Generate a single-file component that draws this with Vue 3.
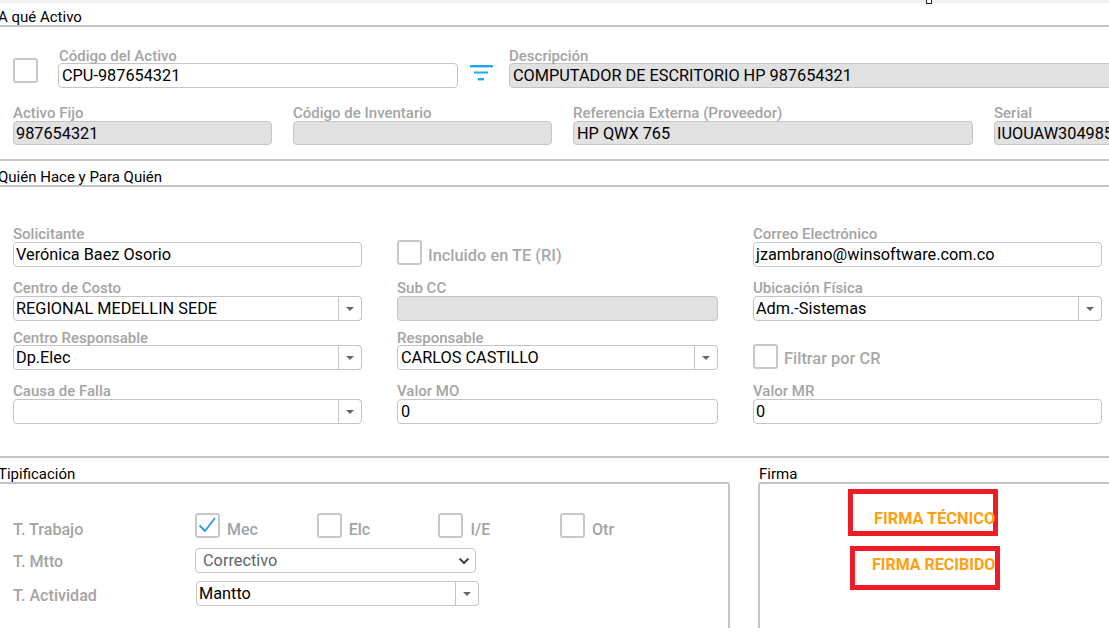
<script setup>
const activoTop = [
  { label: 'Activo Fijo', value: '987654321', w: 259 },
  { label: 'Código de Inventario', value: '', w: 259 },
  { label: 'Referencia Externa (Proveedor)', value: 'HP QWX 765', w: 400 },
  { label: 'Serial', value: 'IUOUAW304985', w: 140 },
]
const filas = [
  { cls: 'r1', cells: [
    { label: 'Solicitante', value: 'Verónica Baez Osorio' },
    { check: 'Incluido en TE (RI)' },
    { label: 'Correo Electrónico', value: 'jzambrano@winsoftware.com.co' },
  ] },
  { cls: 'r2', cells: [
    { label: 'Centro de Costo', value: 'REGIONAL MEDELLIN SEDE', combo: true },
    { label: 'Sub CC', value: '', off: true },
    { label: 'Ubicación Física', value: 'Adm.-Sistemas', combo: true },
  ] },
  { cls: 'r3', cells: [
    { label: 'Centro Responsable', value: 'Dp.Elec', combo: true },
    { label: 'Responsable', value: 'CARLOS CASTILLO', combo: true },
    { check: 'Filtrar por CR' },
  ] },
  { cls: 'r4', cells: [
    { label: 'Causa de Falla', value: '', combo: true },
    { label: 'Valor MO', value: '0' },
    { label: 'Valor MR', value: '0' },
  ] },
]
const tipos = [
  { label: 'Mec', on: true },
  { label: 'Elc', on: false },
  { label: 'I/E', on: false },
  { label: 'Otr', on: false },
]
</script>

<template>
  <div class="page">
    <div class="strip"></div>
    <span class="cursor"></span>

    <div class="head first">A qué Activo</div>

    <div class="row-a">
      <span class="box big"></span>
      <div class="field code">
        <label>Código del Activo</label>
        <div class="input pad3">CPU-987654321</div>
      </div>
      <svg class="filter" width="24" height="16" viewBox="0 0 24 16">
        <rect x="0" y="0" width="23" height="2.4" fill="#1ea7f0" />
        <rect x="4" y="6.5" width="14" height="2" fill="#1ea7f0" />
        <rect x="8" y="13" width="6" height="2.4" fill="#1ea7f0" />
      </svg>
      <div class="field desc">
        <label>Descripción</label>
        <div class="input off pad3">COMPUTADOR DE ESCRITORIO HP 987654321</div>
      </div>
    </div>

    <div class="row-b">
      <div v-for="c in activoTop" :key="c.label" class="field" :style="{ width: c.w + 'px' }">
        <label>{{ c.label }}</label>
        <div class="input off short">{{ c.value }}</div>
      </div>
    </div>

    <div class="head second">Quién Hace y Para Quién</div>

    <div class="people">
      <div v-for="f in filas" :key="f.cls" class="people-row" :class="f.cls">
        <template v-for="c in f.cells" :key="c.label || c.check">
          <div v-if="c.check" class="check-cell">
            <span class="box"></span>
            <span class="check-text">{{ c.check }}</span>
          </div>
          <div v-else class="field">
            <label>{{ c.label }}</label>
            <div class="input" :class="{ off: c.off, combo: c.combo }">
              <span class="val">{{ c.value }}</span>
              <span v-if="c.combo" class="drop"><i></i></span>
            </div>
          </div>
        </template>
      </div>
    </div>

    <div class="lower">
      <section class="tip">
        <div class="sub">Tipificación</div>
        <div class="panel tip-panel">
          <div class="tip-row trabajo">
            <span class="tip-label">T. Trabajo</span>
            <div class="checks">
              <div v-for="t in tipos" :key="t.label" class="tcheck">
                <span class="box">
                  <svg v-if="t.on" width="21" height="21" viewBox="0 0 21 21">
                    <path d="M2.5 10.5 L8 16 L18 3" fill="none" stroke="#2196f3" stroke-width="1.8" />
                  </svg>
                </span>
                <span class="tcheck-text">{{ t.label }}</span>
              </div>
            </div>
          </div>
          <div class="tip-row mtto">
            <span class="tip-label">T. Mtto</span>
            <div class="input native">
              <span class="val">Correctivo</span>
              <svg width="12" height="8" viewBox="0 0 12 8">
                <path d="M1.5 1.5 L6 6 L10.5 1.5" fill="none" stroke="#444" stroke-width="2" />
              </svg>
            </div>
          </div>
          <div class="tip-row actividad">
            <span class="tip-label">T. Actividad</span>
            <div class="input combo act">
              <span class="val">Mantto</span>
              <span class="drop"><i></i></span>
            </div>
          </div>
        </div>
      </section>

      <section class="firma">
        <div class="sub firma-title">Firma</div>
        <div class="panel firma-panel">
          <div class="mark one"><b>FIRMA TÉCNICO</b></div>
          <div class="mark two"><b>FIRMA RECIBIDO</b></div>
        </div>
      </section>
    </div>
  </div>
</template>

<style>
html, body { margin: 0; background: #fff; overflow: hidden; }
</style>

<style scoped>
.page {
  position: relative;
  width: 1109px;
  height: 632px;
  overflow: hidden;
  background: #fff;
  font-family: Roboto, "Liberation Sans", sans-serif;
  color: #000;
}
.strip { height: 3px; background: #f3f0f0; }
.cursor {
  position: absolute;
  left: 926px;
  top: -2px;
  width: 4px;
  height: 4px;
  border: 1px solid #222;
  background: #fff;
}
.head {
  box-sizing: border-box;
  font-size: 15px;
  line-height: 18px;
  border-bottom: 2px solid #c4c4c4;
  text-indent: -2px;
}
.head.first { height: 24px; padding-top: 5px; }
.head.second {
  height: 28px;
  margin-top: 14px;
  padding-top: 7px;
  border-top: 2px solid #c4c4c4;
}

label {
  display: block;
  height: 14px;
  font-size: 15px;
  line-height: 14px;
  font-weight: 500;
  color: #a4a4a4;
  white-space: nowrap;
}
.input {
  box-sizing: border-box;
  display: flex;
  align-items: center;
  height: 25px;
  padding-left: 2px;
  border: 1px solid #c4c4c4;
  border-radius: 4px;
  background: #fff;
  font-size: 16.3px;
  white-space: nowrap;
}
.input.pad3 { padding-left: 3px; }
.input.off { background: #e1e1e1; }
.input.short { height: 24px; margin-top: 1px; }
.row-b .field:nth-child(3) .input { padding-left: 3px; }
.people-row .field:nth-child(2) .input { padding-left: 3px; }
.val { flex: 1; min-width: 0; }
.box {
  box-sizing: border-box;
  display: block;
  flex: none;
  width: 25px;
  height: 25px;
  border: 2px solid #c8c8c8;
  border-radius: 3px;
  background: #fff;
}

.row-a {
  display: flex;
  align-items: flex-start;
  height: 39px;
  margin-top: 22px;
  padding-left: 13px;
}
.row-a .big { margin-top: 9px; margin-right: 20px; }
.field.code { flex: none; width: 400px; }
.field.code label { padding-left: 1px; }
.filter { flex: none; margin: 16px 15px 0 12px; }
.field.desc { flex: none; width: 640px; }

.row-b {
  display: flex;
  gap: 21px;
  height: 39px;
  margin-top: 18px;
  padding-left: 13px;
}
.row-b .field { flex: none; }

.people { padding-top: 40px; }
.people-row {
  display: grid;
  grid-template-columns: 349px 321px 349px;
  column-gap: 35px;
  padding-left: 13px;
  height: 39px;
}
.people-row.r2 { margin-top: 15px; }
.people-row.r3 { margin-top: 11px; }
.people-row.r4 { margin-top: 14px; }
.people-row.r1 .input,
.people-row.r2 .input,
.people-row.r4 .input { margin-top: 1px; height: 25px; }
.people-row.r1 .check-cell { padding-top: 13px; }
.people-row.r3 .check-cell { padding-top: 13px; }
.people-row.r3 .check-text { margin-top: 2px; }
.check-cell { display: flex; align-items: flex-start; gap: 6px; }
.check-text {
  font-size: 16.4px;
  line-height: 25px;
  margin-top: 3px;
  font-weight: 500;
  color: #a8a8a8;
  white-space: nowrap;
}
.combo { padding-right: 0; }
.drop {
  box-sizing: border-box;
  flex: none;
  display: flex;
  align-items: center;
  justify-content: center;
  width: 24px;
  height: 25px;
  margin: 0 -1px 0 0;
  border: 1px solid #c4c4c4;
  border-radius: 0 4px 4px 0;
  background: #fff;
}
.drop i {
  width: 0;
  height: 0;
  border-left: 4px solid transparent;
  border-right: 4px solid transparent;
  border-top: 4px solid #666;
}

.lower {
  display: grid;
  grid-template-columns: 730px 351px;
  column-gap: 28px;
  margin-top: 33px;
  border-top: 2px solid #c4c4c4;
}
.sub {
  height: 24px;
  font-size: 15px;
  line-height: 18px;
  padding-top: 7px;
  box-sizing: border-box;
  text-indent: -2px;
}
.firma-title { text-indent: 1px; }
.panel {
  box-sizing: border-box;
  height: 146px;
  border: 2px solid #c4c4c4;
  border-bottom: 0;
  border-radius: 3px 3px 0 0;
}
.tip-panel {
  border-left: 0;
  border-top-left-radius: 0;
  padding: 31px 0 0 13px;
}
.tip-row { display: flex; align-items: center; height: 25px; }
.tip-row.mtto { margin-top: 8px; }
.tip-row.actividad { margin-top: 8px; }
.tip-label {
  flex: none;
  width: 182px;
  font-size: 16.1px;
  font-weight: 500;
  color: #a4a4a4;
  white-space: nowrap;
}
.tip-row.trabajo .tip-label { margin-top: 4px; }
.tip-row.mtto .tip-label { margin-top: 1px; }
.tip-row.actividad .tip-label { margin-top: 3px; }
.checks { display: flex; }
.tcheck { display: flex; width: 121.7px; gap: 7px; align-items: flex-start; }
.tcheck svg { display: block; }
.tcheck-text {
  font-size: 16px;
  line-height: 25px;
  margin-top: 4px;
  color: #a0a4a8;
  font-weight: 500;
}
.input.native { width: 281px; padding: 0 5px 0 7px; color: #5f6368; }
.input.act { width: 283px; margin-left: 1px; padding-left: 2px; }

.firma-panel {
  border-right: 0;
  border-top-right-radius: 0;
  padding-top: 5px;
}
.mark {
  box-sizing: border-box;
  display: flex;
  border: 5px solid #ee1c25;
}
.mark b {
  position: relative;
  line-height: 18px;
  font-weight: 700;
  color: #ff9f11;
  white-space: nowrap;
}
.mark.one b { font-size: 16.3px; }
.mark.two b { font-size: 16px; }
.mark.one { width: 150px; height: 47px; margin-left: 88px; padding: 16px 0 0 21px; }
.mark.two { width: 150px; height: 44px; margin: 10px 0 0 90px; padding: 5px 0 0 17px; }
</style>
